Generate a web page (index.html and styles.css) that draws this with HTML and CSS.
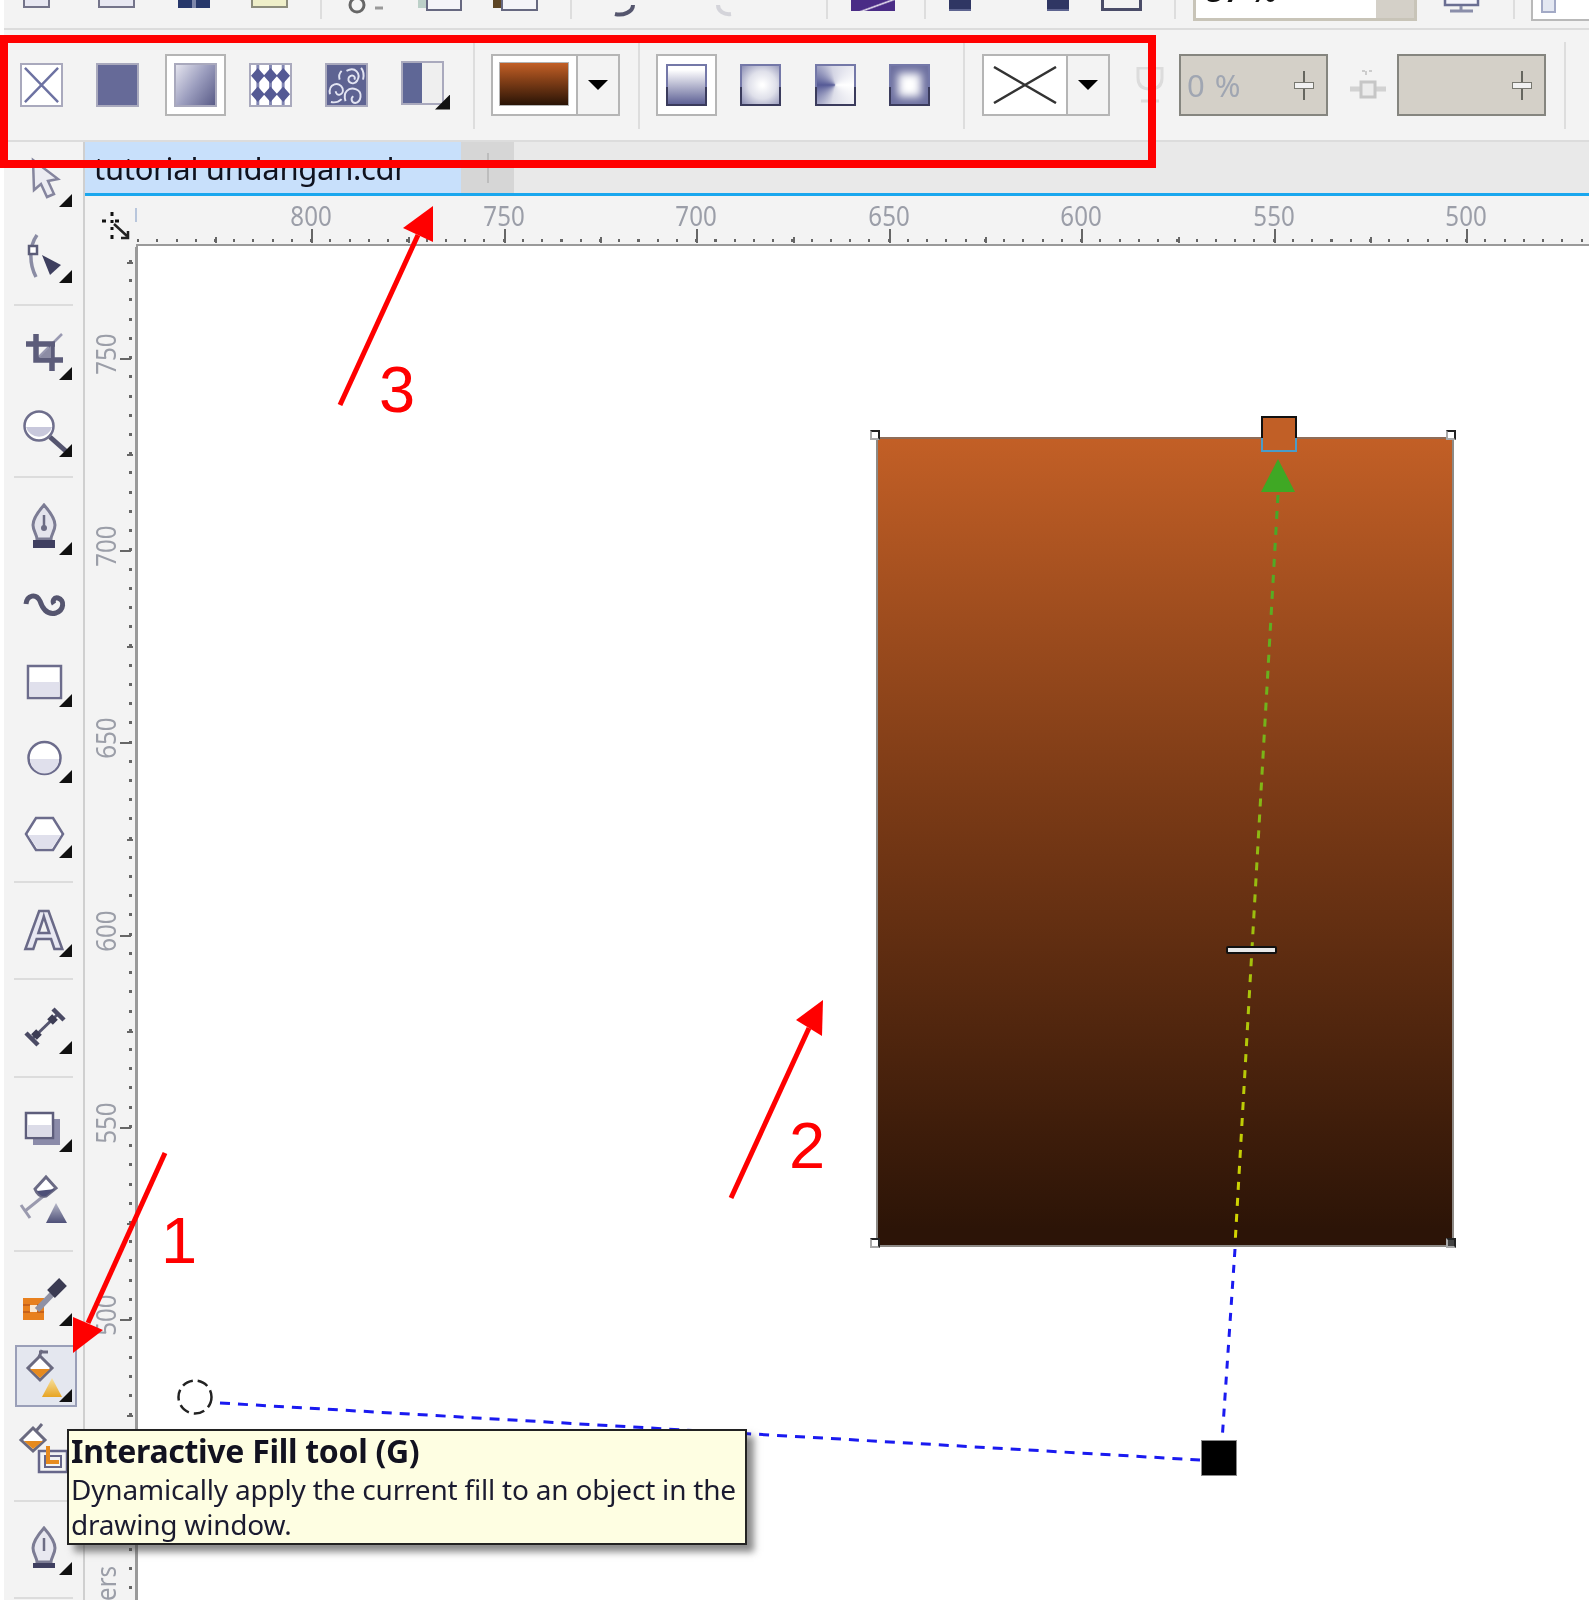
FILE: index.html
```html
<!DOCTYPE html>
<html lang="en">
<head>
<meta charset="utf-8">
<title>Interactive Fill tool</title>
<link rel="stylesheet" href="styles.css">
</head>
<body>
<div class="app">
  <header class="topbar">
    <div class="tb-doc w27 g19"></div>
    <div class="tb-doc w37 g48"></div>
    <div class="tb-dark w32 g43"></div>
    <div class="tb-note w37 g41"></div>
    <div class="tb-sep g32"></div>
    <svg class="tb-svg w43 g25" viewBox="0 0 43 12"><circle cx="12" cy="0" r="7" fill="none" stroke="#666" stroke-width="3"/><path d="M30 3h8" stroke="#999" stroke-width="3"/></svg>
    <div class="tb-paste w36 g38"></div>
    <div class="tb-paste brown w37 g39"></div>
    <div class="tb-sep g32"></div>
    <svg class="tb-svg w31 g37" viewBox="0 0 31 12"><path d="M26 0C26 7 16 11 8 9" fill="none" stroke="#55566e" stroke-width="4"/></svg>
    <svg class="tb-svg w21 g76" viewBox="0 0 21 12"><path d="M4 0C4 6 10 10 17 9" fill="none" stroke="#d4d4da" stroke-width="4"/></svg>
    <div class="tb-sep g91"></div>
    <div class="tb-purple w44 g25"></div>
    <div class="tb-sep g29"></div>
    <div class="tb-save w22 g25"></div>
    <div class="tb-save w22 g76"></div>
    <div class="tb-print w41 g32"></div>
    <div class="tb-sep g32"></div>
    <div class="tb-zoom g19"><span class="tb-zoom-text">57 %</span><span class="tb-zoom-btn"></span></div>
    <svg class="tb-svg w39 g25" viewBox="0 0 39 22"><rect x="3" y="-4" width="33" height="9" fill="#f4f4fa" stroke="#6a6e92" stroke-width="2.5"/><path d="M19 6v4M8 11h23" stroke="#8a8eaa" stroke-width="3"/></svg>
    <div class="tb-sep g32"></div>
    <div class="tb-box g18"><span class="tb-box-mark"></span></div>
  </header>

  <section class="propbar">
    <div class="fill-ic ic-none g16"><svg viewBox="0 0 40 41"><path d="M3 3l34 35M37 3L3 38" stroke="#6d72a2" stroke-width="2.5"/></svg></div>
    <div class="fill-ic ic-solid g33"></div>
    <div class="selected-btn g26"><div class="fill-ic ic-fountain"></div></div>
    <div class="fill-ic ic-pattern g23"><svg viewBox="0 0 40 41"><path d="M7 0V41M20 0V41M33 0V41" stroke="#8387b4" stroke-width="3"/><path d="M0 11L7 3L14 11L7 19ZM13 11L20 3L27 11L20 19ZM26 11L33 3L40 11L33 19ZM0 30L7 22L14 30L7 38ZM13 30L20 22L27 30L20 38ZM26 30L33 22L40 30L33 38Z" fill="#555a94"/></svg></div>
    <div class="fill-ic ic-texture g33"><svg viewBox="0 0 40 41"><path d="M3 30C1 19 13 16 16 24c2 7-7 9-7 3M20 6c9-5 15 3 11 10-4 6-12 1-8-4 3-3 7 0 5 3M15 6c-3 3-3 6-2 9M19 37c-3-9 3-15 11-12 7 3 5 13-1 14-4 0-5-5-2-7M35 3c3 4 3 8 2 12M4 38c5 1 9-1 11-3" fill="none" stroke="#e2e4f2" stroke-width="2"/></svg></div>
    <div class="half-wrap g33"><div class="fill-ic ic-half"></div><span class="corner-tri"></span></div>
    <div class="pb-sep g29"></div>
    <div class="combo combo-color g18"><span class="combo-swatch"></span><span class="combo-arrow"><i class="arrow"></i></span></div>
    <div class="pb-sep g18"></div>
    <div class="selected-btn g18"><div class="grad-ic ic-linear"></div></div>
    <div class="grad-ic ic-radial g23"></div>
    <div class="grad-ic ic-conical g34"></div>
    <div class="grad-ic ic-square g33"></div>
    <div class="pb-sep g33"></div>
    <div class="combo combo-none g19"><span class="combo-x"><svg viewBox="0 0 76 38"><path d="M5 1l62 36M67 1L5 37" stroke="#333" stroke-width="2.500"/></svg></span><span class="combo-arrow"><i class="arrow"></i></span></div>
    <svg class="pb-wine g26" viewBox="0 0 28 36"><path d="M2 1h24v10c0 8-5 11-12 11S2 19 2 11zM14 22v11M5 34h18" fill="#f0f0f0" stroke="#dcdcdc" stroke-width="3"/></svg>
    <div class="spin spin-a g15"><span class="spin-text">0 %</span><i class="slider"></i></div>
    <svg class="pb-node g22" viewBox="0 0 36 31"><path d="M12 1h3M19 1h3M16 1v4" stroke="#ccc" stroke-width="2"/><path d="M0 19h36" stroke="#d2d2d2" stroke-width="5"/><rect x="11" y="12" width="14" height="15" fill="#ececec" stroke="#c6c6c6" stroke-width="3"/></svg>
    <div class="spin spin-b g11"><i class="slider"></i></div>
    <div class="pb-sep g18"></div>
  </section>

  <div class="workspace">
    <nav class="toolbox">
      <div class="tool"><svg viewBox="0 0 64 64"><path d="M21 12L46 31L36 33L42 46L35 49L29 36L22 42Z" fill="#ececf2" stroke="#85859e" stroke-width="2.5"/><path class="tri" d="M60 59H47L60 46Z"/></svg></div>
      <div class="tool"><svg viewBox="0 0 64 64"><path d="M25 11C17 22 17 40 24 53" fill="none" stroke="#8a8ca4" stroke-width="3.500"/><rect x="17" y="22" width="8" height="8" fill="#fff" stroke="#5b5c78" stroke-width="2.5"/><path d="M30 31L49 41L38 51Z" fill="#3e3f5f"/><path class="tri" d="M60 59H47L60 46Z"/></svg></div>
      <div class="tool-sep"></div>
      <div class="tool"><svg viewBox="0 0 64 64"><path d="M50 14L24 40" stroke="#9a9ab2" stroke-width="2.500"/><path d="M14 24H43M24 14V40H51M40 24V51" fill="none" stroke="#5c5c7a" stroke-width="5.500"/><path d="M27 38L39 26V38Z" fill="#8c8ca4"/><path class="tri" d="M60 60H47L60 47Z"/></svg></div>
      <div class="tool"><svg viewBox="0 0 64 64"><circle cx="27" cy="31" r="14.5" fill="#fff" stroke="#6e6e8c" stroke-width="2.5"/><path d="M14 32H40A13.500 13.500 0 0 1 14 32Z" fill="#c8c8dc"/><path d="M38 42L56 58" stroke="#55556f" stroke-width="5"/><path class="tri" d="M60 62H47L60 49Z"/></svg></div>
      <div class="tool-sep"></div>
      <div class="tool"><svg viewBox="0 0 64 64"><path d="M32 10C25 18 21 24 21 30C21 36 25 40 25 44H39C39 40 43 36 43 30C43 24 39 18 32 10Z" fill="#e4e4ec" stroke="#7c7c94" stroke-width="3"/><path d="M32 20V33" stroke="#6c6c84" stroke-width="2.500"/><circle cx="32" cy="33" r="3" fill="#6c6c84"/><rect x="21" y="45" width="22" height="8" fill="#3f3f60"/><path class="tri" d="M60 60H47L60 47Z"/></svg></div>
      <div class="tool"><svg viewBox="0 0 64 64"><path d="M14 31C15 22 24 20 28 28C31 37 36 42 44 40C52 37 53 27 46 25C42 24 40 28 42 31" fill="none" stroke="#55556f" stroke-width="5"/></svg></div>
      <div class="tool"><svg viewBox="0 0 64 64"><rect x="16" y="16" width="33" height="32" fill="#fff" stroke="#6c6c8c" stroke-width="2.500"/><rect x="17.500" y="32" width="30" height="14.500" fill="#e0e0ec"/><path class="tri" d="M60 57H47L60 44Z"/></svg></div>
      <div class="tool"><svg viewBox="0 0 64 64"><circle cx="32.500" cy="32" r="16" fill="#fff" stroke="#6c6c8c" stroke-width="2.500"/><path d="M18 33H47A14.500 14.500 0 0 1 18 33Z" fill="#e0e0ec"/><path class="tri" d="M60 57H47L60 44Z"/></svg></div>
      <div class="tool"><svg viewBox="0 0 64 64"><path d="M14 33L24 17H41L51 33L41 49H24Z" fill="#fff" stroke="#6c6c8c" stroke-width="2.500"/><path d="M16 34H49L40 47H25Z" fill="#e0e0ec"/><path class="tri" d="M60 57H47L60 44Z"/></svg></div>
      <div class="tool-sep"></div>
      <div class="tool"><svg viewBox="0 0 64 64"><text class="tool-a" x="12" y="51">A</text><path class="tri" d="M60 59H47L60 46Z"/></svg></div>
      <div class="tool-sep"></div>
      <div class="tool"><svg viewBox="0 0 64 64"><path d="M19 45L46 19" stroke="#55556f" stroke-width="3"/><path d="M14 38L26 50M41 14L52 25" stroke="#4a4a64" stroke-width="4.500"/><path d="M27 37L22 42M38 27L43 22" stroke="#3d3d55" stroke-width="8"/><path class="tri" d="M60 59H47L60 46Z"/></svg></div>
      <div class="tool-sep"></div>
      <div class="tool"><svg viewBox="0 0 64 64"><rect x="21" y="23" width="27" height="26" fill="#8b8ba9"/><rect x="14" y="17" width="27" height="25" fill="#fff" stroke="#5e5e7c" stroke-width="2.500"/><rect x="15.500" y="29" width="24" height="11.500" fill="#dcdce8"/><path class="tri" d="M60 56H47L60 43Z"/></svg></div>
      <div class="tool"><svg viewBox="0 0 64 64"><defs><linearGradient id="tr" x1="0" y1="0" x2="0" y2="1"><stop offset="0" stop-color="#b5b7c8"/><stop offset="1" stop-color="#4e5078"/></linearGradient></defs><path d="M13 43L23 35L34 26" stroke="#9a9aae" stroke-width="3" fill="none"/><path d="M9 37L18 50" stroke="#9a9aae" stroke-width="3"/><path d="M23 21L34 9L44 20L34 28C29 29 25 26 23 21Z" fill="#fff" stroke="#6a6a84" stroke-width="3"/><path d="M25 23L43 21L34 28C30 29 27 27 25 23Z" fill="#4e5078"/><path d="M44 35L55 55H34Z" fill="url(#tr)"/></svg></div>
      <div class="tool-sep"></div>
      <div class="tool"><svg viewBox="0 0 64 64"><rect x="11" y="30" width="21" height="22" fill="#e8801e"/><rect x="18" y="37" width="7" height="7" fill="#fbe9d4"/><path d="M11 37H18M25 37H32M11 44H18M25 44H32" stroke="#c8621a" stroke-width="2"/><path d="M25 42L44 22" stroke="#8f91a4" stroke-width="6"/><path d="M39 26L51 14" stroke="#3b3b52" stroke-width="11"/><path class="tri" d="M60 58H47L60 45Z"/></svg></div>
      <div class="tool tool-active"><svg viewBox="0 0 64 64"><defs><linearGradient id="or" x1="0" y1="0" x2="0" y2="1"><stop offset="0" stop-color="#f7e1a0"/><stop offset="1" stop-color="#e7a423"/></linearGradient></defs><path d="M28 12L40 24L28 36L16 24Z" fill="#fff" stroke="#6a6a80" stroke-width="3"/><path d="M18 25H38L28 34Z" fill="#e68a1e"/><path d="M27 13L30 6M27 8H36" stroke="#6a6a80" stroke-width="3"/><path d="M40 34L50 53H30Z" fill="url(#or)"/><path class="tri" d="M60 58H47L60 45Z"/></svg></div>
      <div class="tool"><svg viewBox="0 0 64 64"><path d="M21 10L33 22L21 33L9 22Z" fill="#fff" stroke="#6a6a80" stroke-width="3"/><path d="M12 23H31L21 31Z" fill="#e68a1e"/><path d="M24 13L30 6" stroke="#6a6a80" stroke-width="3"/><rect x="27" y="33" width="28" height="21" fill="none" stroke="#66668a" stroke-width="2.500"/><rect x="33" y="38" width="16" height="11" fill="none" stroke="#66668a" stroke-width="2"/><path d="M36 28V44H47" fill="none" stroke="#e68a1e" stroke-width="4"/></svg></div>
      <div class="tool-sep"></div>
      <div class="tool"><svg viewBox="0 0 64 64"><path d="M32 10C25 18 21 24 21 30C21 36 25 40 25 44H39C39 40 43 36 43 30C43 24 39 18 32 10Z" fill="#e8e8f0" stroke="#7c7c94" stroke-width="3"/><path d="M32 20V33" stroke="#6c6c84" stroke-width="2.500"/><rect x="21" y="45" width="22" height="5" fill="#3f3f60"/><path class="tri" d="M60 57H47L60 44Z"/></svg></div>
      <div class="tool-sep"></div>
    </nav>

    <main class="main">
      <div class="tabs">
        <div class="tab"><span class="tab-label">tutorial undangan.cdr</span></div>
        <div class="tab-handle"><i></i></div>
      </div>
      <div class="rulers">
        <div class="ruler-corner"><svg viewBox="0 0 30 30"><path d="M11 1v4M11 9v3M1 10h4M14 10h4M11 16v3M11 24v4" stroke="#111" stroke-width="3"/><path d="M13 13L26 25M20 27H27V20" fill="none" stroke="#222" stroke-width="2.500"/></svg><i class="corner-mark"></i></div>
        <div class="h-ruler">
          <div class="h-cell"><span>800</span></div>
          <div class="h-cell"><span>750</span></div>
          <div class="h-cell"><span>700</span></div>
          <div class="h-cell"><span>650</span></div>
          <div class="h-cell"><span>600</span></div>
          <div class="h-cell"><span>550</span></div>
          <div class="h-cell"><span>500</span></div>
        </div>
        <div class="v-ruler">
          <div class="v-cell"><span>750</span></div>
          <div class="v-cell"><span>700</span></div>
          <div class="v-cell"><span>650</span></div>
          <div class="v-cell"><span>600</span></div>
          <div class="v-cell"><span>550</span></div>
          <div class="v-cell"><span>500</span></div>
          <div class="v-cell v-last"><span class="units">ers</span></div>
        </div>
        <div class="canvas"></div>
      </div>
    </main>
  </div>

  <div class="page-rect"></div>
  <i class="handle h-tl"></i><i class="handle h-tr"></i><i class="handle h-bl"></i><i class="handle h-br"></i>

  <svg class="drawing" viewBox="0 0 1589 1600">
    <defs>
      <linearGradient id="dash" gradientUnits="userSpaceOnUse" x1="1278" y1="495" x2="1235" y2="1245">
        <stop offset="0" stop-color="#41a72a"/><stop offset=".5" stop-color="#94bb10"/><stop offset="1" stop-color="#d6d600"/>
      </linearGradient>
    </defs>
    <path d="M1278 495L1235 1245" fill="none" stroke="url(#dash)" stroke-width="3" stroke-dasharray="8 8"/>
    <path d="M1235 1249L1222 1441" fill="none" stroke="#1a1af0" stroke-width="3" stroke-dasharray="8 8"/>
    <path d="M220 1403L1200 1460" fill="none" stroke="#1a1af0" stroke-width="3" stroke-dasharray="10 8"/>
    <circle cx="195" cy="1397" r="16.500" fill="#fff" stroke="#222" stroke-width="2.500" stroke-dasharray="11 5"/>
    <path d="M1278 459L1295 492H1261Z" fill="#3fa824"/>
  </svg>
  <div class="stop-top"></div>
  <div class="stop-mid"></div>
  <div class="stop-end"></div>

  <aside class="tooltip">
    <strong class="tip-title">Interactive Fill tool (G)</strong>
    <p class="tip-body">Dynamically apply the current fill to an object in the drawing window.</p>
  </aside>

  <svg class="drawing" viewBox="0 0 1589 1600">
    <g fill="#f00" stroke="none">
      <path d="M73 1353L73 1317L103 1330Z"/>
      <path d="M823 1000L796 1020L822 1036Z"/>
      <path d="M433 206L403 228L433 242Z"/>
    </g>
    <g stroke="#f00" stroke-width="5" fill="none">
      <path d="M165 1153L88 1323"/>
      <path d="M731 1198L809 1028"/>
      <path d="M340 405L418 235"/>
    </g>
  </svg>
  <span class="mark mark-1">1</span>
  <span class="mark mark-2">2</span>
  <span class="mark mark-3">3</span>
  <div class="redbox"></div>
</div>
</body>
</html>
```
FILE: styles.css
```css
*, *::before, *::after { box-sizing: border-box; }
html, body { margin: 0; padding: 0; background: #fff; }
.app {
  position: relative; width: 1589px; height: 1600px; overflow: hidden;
  padding-left: 4px; display: flex; flex-direction: column;
  font-family: "Noto Sans", "Liberation Sans", sans-serif;
  filter: blur(.6px); background: #fff;
}
i { display: block; }

.g11 { margin-left: 11px; } .g15 { margin-left: 15px; } .g16 { margin-left: 16px; }
.g18 { margin-left: 18px; } .g19 { margin-left: 19px; } .g22 { margin-left: 22px; }
.g23 { margin-left: 23px; } .g25 { margin-left: 25px; } .g26 { margin-left: 26px; }
.g29 { margin-left: 29px; } .g32 { margin-left: 32px; }
.g33 { margin-left: 33px; } .g34 { margin-left: 34px; }
.g37 { margin-left: 37px; } .g38 { margin-left: 38px; } .g39 { margin-left: 39px; }
.g41 { margin-left: 41px; } .g43 { margin-left: 43px; } .g48 { margin-left: 48px; }
.g76 { margin-left: 76px; } .g91 { margin-left: 91px; }
.w21 { width: 21px; } .w22 { width: 22px; } .w27 { width: 27px; } .w31 { width: 31px; }
.w32 { width: 32px; } .w36 { width: 36px; } .w37 { width: 37px; } .w39 { width: 39px; }
.w41 { width: 41px; } .w43 { width: 43px; } .w44 { width: 44px; }

/* top toolbar, cut off by the top of the picture */
.topbar {
  flex: none; height: 30px; display: flex; align-items: flex-start;
  background: #f3f3f3; border-bottom: 2px solid #dcdcdc;
}
.tb-doc { flex: none; height: 8px; background: #e8e8f2; border: 2px solid #74748a; border-top: 0; }
.tb-dark { flex: none; height: 8px; background: linear-gradient(90deg, #27386b 45%, #7d86aa 45%, #7d86aa 55%, #27386b 55%); }
.tb-note { flex: none; height: 8px; background: #efefc9; border: 2px solid #8d8d7c; border-top: 0; }
.tb-sep { flex: none; width: 2px; height: 19px; margin-right: -2px; background: #dddddd; }
.tb-svg { flex: none; height: 22px; }
.tb-paste { flex: none; height: 11px; background: #f4f4f8; border: 2px solid #666880; border-top: 0; box-shadow: -8px -3px 0 #bcd0c8; }
.tb-paste.brown { box-shadow: -8px -3px 0 #5d4524; }
.tb-purple { flex: none; height: 11px; background: linear-gradient(160deg, #4a2c86 50%, #e8e2f0 56%, #4a2c86 62%); }
.tb-save { flex: none; height: 11px; background: #2f3663; border-bottom: 2px solid #5d6490; }
.tb-print { flex: none; height: 11px; background: #f3f3f3; border: 3px solid #4a4c68; border-top: 0; }
.tb-zoom {
  flex: none; width: 224px; height: 21px; display: flex; justify-content: space-between;
  background: #fff; border: 3px solid #c8c4b8; border-top: 0; overflow: hidden;
}
.tb-zoom-text { font-size: 31px; line-height: 1; font-weight: 600; margin: -25px 0 0 10px; color: #111; }
.tb-zoom-btn { width: 38px; background: #d4d0c8; }
.tb-box { flex: none; width: 58px; height: 21px; background: #fff; border: 2px solid #b9b9b9; border-top: 0; border-right: 0; padding-left: 8px; }
.tb-box-mark { display: block; width: 15px; height: 13px; background: #e4e8f2; border: 2px solid #a3aac6; border-top: 0; }

/* property bar */
.propbar {
  flex: none; height: 112px; display: flex; align-items: center;
  background: #f3f3f3; border-bottom: 2px solid #dcdcdc;
}
.propbar > * { flex: none; }
.fill-ic { width: 43px; height: 44px; border: 2px solid #a9a9bd; }
.fill-ic svg { display: block; width: 100%; height: 100%; }
.ic-none { background: #fff; }
.ic-solid { background: #666a98; }
.ic-fountain { background: linear-gradient(125deg, #e4e4ee, #9b9dbe 50%, #5a5c88); }
.ic-pattern { background: #fff; }
.ic-texture { background: #5e6392; }
.half-wrap { position: relative; width: 49px; height: 49px; margin-right: -6px; }
.ic-half { background: linear-gradient(90deg, #5f6796 50%, #efefef 50%); }
.corner-tri { position: absolute; right: 0; bottom: 0; width: 15px; height: 15px; background: #111; clip-path: polygon(100% 0, 100% 100%, 0 100%); }
.selected-btn { display: flex; align-items: center; justify-content: center; width: 61px; height: 62px; background: #fff; border: 2px solid #b5b5b5; }
.pb-sep { width: 2px; height: 87px; margin-right: -2px; background: #dddddd; }
.combo { display: flex; height: 62px; background: #fff; border: 2px solid #b5b5b5; }
.combo-color { width: 129px; }
.combo-none { width: 128px; }
.combo-swatch { display: block; width: 70px; height: 44px; margin: 6px 0 0 6px; background: linear-gradient(#c25f26, #7d3c16 45%, #2a1406); border: 1px solid #b3b3b3; }
.combo-x { display: block; width: 82px; padding: 10px 0 0 5px; }
.combo-x svg { display: block; width: 76px; height: 38px; }
.combo-arrow { flex: 1; display: flex; align-items: center; justify-content: center; background: #f3f3f3; border-left: 2px solid #b5b5b5; }
.combo-color .combo-arrow { margin-left: 7px; }
.arrow { width: 20px; height: 10px; background: #000; clip-path: polygon(0 0, 100% 0, 50% 100%); }
.grad-ic { width: 41px; height: 42px; border: 2px solid transparent; }
.ic-linear {
  background: linear-gradient(#fff, #fff 10%, #5f6296) padding-box,
              linear-gradient(#7478a8 55%, #3a3b5c 55%) border-box;
}
.ic-radial {
  background: radial-gradient(circle at 55% 50%, #fff 5%, #dfe0ea 50%, #8c8eb4 100%) padding-box,
              linear-gradient(#7478a8 55%, #3a3b5c 55%) border-box;
}
.ic-conical {
  background: conic-gradient(from 270deg, #555a96 0, #d4d5e4 22%, #fff 50%, #dcdde8 78%, #555a96 100%) padding-box,
              linear-gradient(#7478a8 55%, #3a3b5c 55%) border-box;
}
.ic-square {
  background: linear-gradient(#fff, #fff) padding-box,
              linear-gradient(#7478a8 55%, #3a3b5c 55%) border-box;
  box-shadow: inset 0 0 9px 7px #6d70a0;
}
.pb-wine { width: 28px; height: 36px; }
.pb-node { width: 36px; height: 31px; }
.spin { position: relative; width: 149px; height: 62px; display: flex; align-items: center; background: #d4d0c8; border: 2px solid #85857f; }
.spin-text { font-size: 31px; letter-spacing: 1px; padding-left: 6px; color: #a0a6b2; }
.slider { position: absolute; right: 12px; top: 15px; width: 20px; height: 29px; background: linear-gradient(#66665f, #66665f) center / 2px 100% no-repeat; }
.slider::after { content: ""; position: absolute; left: 0; top: 11px; width: 20px; height: 7px; background: #f1f1f1; border: 1px solid #77776f; }

/* workspace */
.workspace { flex: 1; display: flex; min-height: 0; }
.toolbox {
  flex: none; width: 81px; background: #f3f3f3;
  border-right: 2px solid #cfcfcf; display: grid; grid-template-columns: 1fr;
  grid-template-rows: 76px 76px 21px 74px 76px 24px 76px 80px 74px 78px 72px 25px 72px 26px 70px 30px 72px 72px 30px 68px 84px 64px 38px 60px 36px;
}
.tool { display: flex; align-items: center; justify-content: center; min-height: 0; }
.tool svg { flex: none; width: 64px; height: 64px; overflow: visible; }
.tool-active { position: relative; }
.tool-active::before { content: ""; position: absolute; left: 11px; top: 11px; width: 62px; height: 62px; background: #e4e7ef; border: 2px solid #9a9fb8; }
.tool-active svg { position: relative; }
.tri { fill: #111; }
.tool-a { font-family: "Liberation Sans", sans-serif; font-weight: 700; font-size: 55px; fill: #e8e8f2; stroke: #6a6a88; stroke-width: 2.5px; }
.tool-sep { display: flex; align-items: center; justify-content: center; }
.tool-sep::after { content: ""; width: 59px; height: 2px; background: #dcdcdc; }

.main { flex: 1; min-width: 0; display: flex; flex-direction: column; }
.tabs { flex: none; height: 54px; display: flex; background: #e9e9e9; border-bottom: 3px solid #1aa7ee; }
.tab { width: 376px; background: #c8e0fb; padding-left: 9px; overflow: hidden; }
.tab-label { font-size: 31px; line-height: 53px; color: #10121e; white-space: nowrap; display: block; letter-spacing: -.3px; }
.tab-handle { width: 53px; background: #d6d6d6; display: flex; align-items: center; justify-content: center; }
.tab-handle i { width: 2px; height: 30px; background: #bdbdbd; }

.rulers { flex: 1; min-height: 0; display: grid; grid-template-columns: 51px 1fr; grid-template-rows: 51px 1fr; }
.ruler-corner { position: relative; background: #f3f3f3; padding: 15px 0 0 16px; }
.ruler-corner svg { display: block; width: 30px; height: 30px; }
.corner-mark { position: absolute; right: -1px; top: 12px; width: 2px; height: 14px; background: #b8c6dc; }
.h-ruler {
  display: flex; padding-left: 79px; overflow: hidden; background-color: #f3f3f3;
  border-bottom: 3px solid #9a9a9a;
  background-image: repeating-linear-gradient(90deg, #666 0 2px, transparent 2px 19.25px);
  background-size: 100% 3px; background-repeat: no-repeat; background-position: 1px 43px;
}
.h-cell { position: relative; flex: none; width: 192.500px; text-align: center; }
.h-cell::before { content: ""; position: absolute; left: 0; bottom: 1px; width: 2px; height: 6px; background: #666; }
.h-cell::after { content: ""; position: absolute; left: 50%; bottom: 1px; width: 2px; height: 14px; background: #666; }
.h-cell span { display: inline-block; padding-top: 4px; font-size: 28px; line-height: 30px; transform: scaleX(.86); color: #9b9ea8; }
.v-ruler {
  display: flex; flex-direction: column; padding-top: 15px; overflow: hidden; background-color: #f3f3f3;
  background-image: repeating-linear-gradient(180deg, #666 0 3px, transparent 3px 19.22px);
  background-size: 3px 100%; background-repeat: no-repeat; background-position: 44px 13px;
}
.v-cell { position: relative; flex: none; height: 192.2px; display: flex; align-items: center; }
.v-cell::before { content: ""; position: absolute; right: 3px; top: 0; width: 6px; height: 2px; background: #666; }
.v-cell::after { content: ""; position: absolute; right: 5px; top: 50%; width: 11px; height: 2px; background: #666; }
.v-cell span {
  display: block; writing-mode: vertical-rl; transform: rotate(180deg) scaleY(.86); margin: -8px 0 0 5px;
  font-size: 28px; line-height: 30px; color: #9b9ea8;
}
.v-last::after { display: none; }
.v-cell .units { position: absolute; left: 0; bottom: 4px; margin: 0 0 0 5px; }
.canvas { background: #fff; border-left: 3px solid #9a9a9a; margin-left: -1px; margin-top: -1px; }

/* objects on the drawing */
.page-rect {
  position: absolute; left: 876px; top: 437px; width: 578px; height: 810px;
  background: linear-gradient(#c25f26, #7a3a16 45%, #2c1407 98%);
  border: 2px solid #8d8a86; border-top-color: #8f6d58;
}
.handle { position: absolute; width: 10px; height: 10px; background: #fff; border: 2px solid #222; border-bottom-color: #aaa; border-left-color: #aaa; }
.h-tl { left: 870px; top: 430px; }
.h-tr { left: 1446px; top: 430px; }
.h-bl { left: 870px; top: 1238px; }
.h-br { left: 1446px; top: 1238px; background: #444; }
.drawing { position: absolute; left: 0; top: 0; width: 1589px; height: 1600px; pointer-events: none; }
.stop-top { position: absolute; left: 1261px; top: 416px; width: 36px; height: 36px; background: #c15f26; border: 2px solid #4a9cc8; }
.stop-top::before { content: ""; position: absolute; left: -2px; top: -2px; width: 36px; height: 22px; border: 2px solid #111; border-bottom: 0; }
.stop-mid { position: absolute; left: 1226px; top: 946px; width: 51px; height: 8px; background: #e8e8e8; border: 2px solid #111; border-radius: 2px; }
.stop-end { position: absolute; left: 1201px; top: 1440px; width: 36px; height: 36px; background: #000; border: 1px solid #888; }

/* tooltip */
.tooltip {
  position: absolute; left: 67px; top: 1429px; width: 680px; height: 116px;
  background: #fefee2; border: 2.500px solid #222; box-shadow: 7px 7px 7px rgba(60,60,60,.6);
  padding: 1px 0 0 2px; color: #121220; overflow: hidden;
}
.tip-title { display: block; font-size: 32px; line-height: 38px; font-weight: 700; letter-spacing: -.3px; white-space: nowrap; }
.tip-body { margin: 2px 0 0; width: 674px; font-size: 28px; line-height: 35px; letter-spacing: -.2px; color: #1b1b30; }

/* annotations */
.mark { position: absolute; font-family: "Liberation Sans", sans-serif; font-size: 65px; line-height: 65px; color: #f00; }
.mark-1 { left: 161px; top: 1208px; }
.mark-2 { left: 789px; top: 1113px; }
.mark-3 { left: 379px; top: 357px; }
.redbox { position: absolute; left: 0; top: 35px; width: 1156px; height: 133px; border: 8px solid #f00; }
```
